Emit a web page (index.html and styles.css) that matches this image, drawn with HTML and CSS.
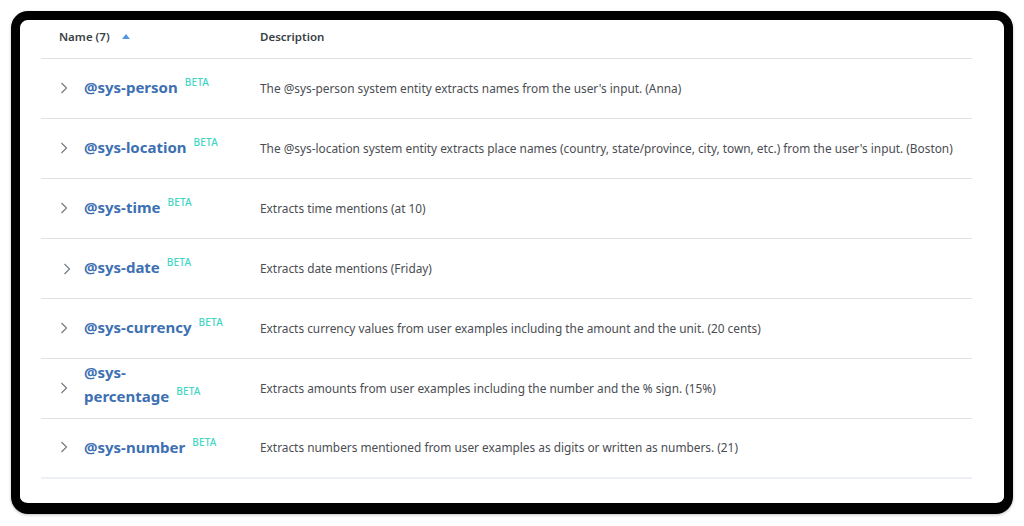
FILE: index.html
```html
<!DOCTYPE html>
<html lang="en">
<head>
<meta charset="utf-8">
<title>System entities</title>
<link rel="stylesheet" href="styles.css">
</head>
<body>
<div class="frame">
  <div class="panel">
    <div class="table">
      <div class="head">
        <div class="th th-name">Name (7) <span class="sort"></span></div>
        <div class="th">Description</div>
      </div>

      <div class="row">
        <div class="chev"><svg viewBox="0 0 8 12" width="8" height="12"><path d="M1.5 1 L6.5 6 L1.5 11" /></svg></div>
        <div class="name"><span class="ent">@sys-person</span><sup class="beta">BETA</sup></div>
        <div class="desc">The @sys-person system entity extracts names from the user's input. (Anna)</div>
      </div>

      <div class="row">
        <div class="chev"><svg viewBox="0 0 8 12" width="8" height="12"><path d="M1.5 1 L6.5 6 L1.5 11" /></svg></div>
        <div class="name"><span class="ent">@sys-location</span><sup class="beta">BETA</sup></div>
        <div class="desc">The @sys-location system entity extracts place names (country, state/province, city, town, etc.) from the user's input. (Boston)</div>
      </div>

      <div class="row">
        <div class="chev"><svg viewBox="0 0 8 12" width="8" height="12"><path d="M1.5 1 L6.5 6 L1.5 11" /></svg></div>
        <div class="name"><span class="ent">@sys-time</span><sup class="beta">BETA</sup></div>
        <div class="desc">Extracts time mentions (at 10)</div>
      </div>

      <div class="row">
        <div class="chev chev-moved"><svg viewBox="0 0 8 12" width="8" height="12"><path d="M1.5 1 L6.5 6 L1.5 11" /></svg></div>
        <div class="name"><span class="ent">@sys-date</span><sup class="beta">BETA</sup></div>
        <div class="desc">Extracts date mentions (Friday)</div>
      </div>

      <div class="row">
        <div class="chev"><svg viewBox="0 0 8 12" width="8" height="12"><path d="M1.5 1 L6.5 6 L1.5 11" /></svg></div>
        <div class="name"><span class="ent">@sys-currency</span><sup class="beta">BETA</sup></div>
        <div class="desc">Extracts currency values from user examples including the amount and the unit. (20 cents)</div>
      </div>

      <div class="row">
        <div class="chev"><svg viewBox="0 0 8 12" width="8" height="12"><path d="M1.5 1 L6.5 6 L1.5 11" /></svg></div>
        <div class="name name-wrap"><span class="ent">@sys-<br>percentage</span><sup class="beta">BETA</sup></div>
        <div class="desc">Extracts amounts from user examples including the number and the % sign. (15%)</div>
      </div>

      <div class="row row-last">
        <div class="chev"><svg viewBox="0 0 8 12" width="8" height="12"><path d="M1.5 1 L6.5 6 L1.5 11" /></svg></div>
        <div class="name"><span class="ent">@sys-number</span><sup class="beta">BETA</sup></div>
        <div class="desc">Extracts numbers mentioned from user examples as digits or written as numbers. (21)</div>
      </div>
    </div>
  </div>
</div>
</body>
</html>
```

FILE: styles.css
```css
* { box-sizing: border-box; }

html, body {
  margin: 0;
  padding: 0;
  background: #ffffff;
}

body {
  padding: 11px 11px 12px 11px;
  font-family: "Noto Sans", "Open Sans", sans-serif;
}

.frame {
  width: 1002px;
  height: 503px;
  border: 9px solid #000;
  border-bottom-width: 11px;
  border-radius: 17px;
  background: #fff;
  box-shadow: 0 1px 3px rgba(0, 0, 0, 0.25);
  overflow: hidden;
}

.panel {
  padding: 0 32px 0 21px;
}

.head {
  display: grid;
  grid-template-columns: 219px 1fr;
  height: 39px;
  align-items: center;
  padding-bottom: 6px;
  border-bottom: 1px solid #dfe3e6;
}

.th {
  font-size: 11.5px;
  font-weight: 600;
  color: #3a3f46;
}

.th-name {
  padding-left: 18px;
  display: flex;
  align-items: center;
}

.sort {
  display: inline-block;
  width: 0;
  height: 0;
  margin-left: 12px;
  margin-top: 1px;
  border-left: 4.5px solid transparent;
  border-right: 4.5px solid transparent;
  border-bottom: 5px solid #5596e6;
}

.row {
  display: grid;
  grid-template-columns: 43px 176px 1fr;
  align-items: center;
  height: 60px;
  padding-bottom: 2px;
  border-bottom: 1px solid #dfe3e6;
}

.row-last {
  border-bottom: 2px solid #edf1f7;
}

.chev {
  padding-left: 19px;
  display: flex;
  align-items: center;
}

.chev svg path {
  fill: none;
  stroke: #6f7680;
  stroke-width: 1.1;
}

.chev-moved {
  padding-left: 22px;
  padding-top: 3px;
}

.name {
  padding-right: 20px;
  line-height: 23px;
}

.name-wrap {
  padding-bottom: 8px;
  line-height: 24px;
}

.ent {
  font-size: 15px;
  font-weight: 700;
  color: #3d70b2;
}

.beta {
  font-size: 10px;
  font-weight: 500;
  color: #41d6c3;
  margin-left: 7px;
  vertical-align: 7px;
  line-height: 0;
  letter-spacing: 0.2px;
}

.desc {
  font-size: 11.85px;
  color: #4a4d52;
}
```
